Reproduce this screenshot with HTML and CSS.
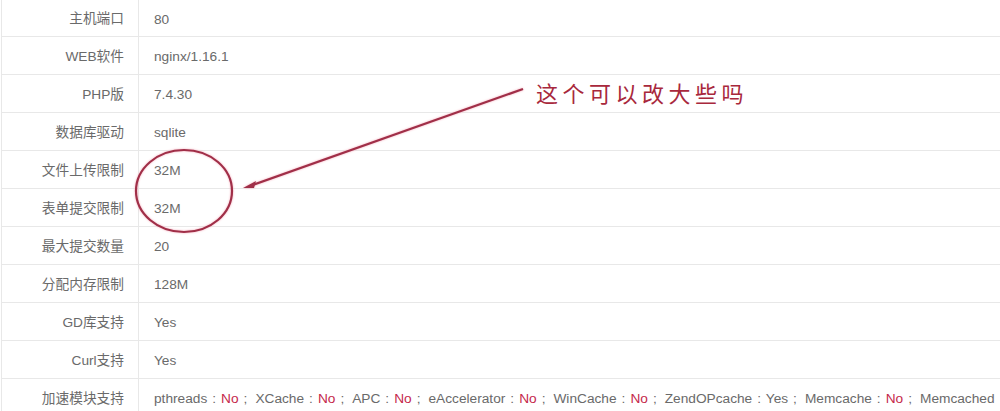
FILE: index.html
```html
<!DOCTYPE html>
<html lang="zh-CN">
<head>
<meta charset="utf-8">
<title>服务器信息</title>
<link rel="stylesheet" href="styles.css">
</head>
<body>
<div class="sheet">
  <div class="info">
    <div class="row first"><div class="key">主机端口</div><div class="val">80</div></div>
    <div class="row"><div class="key">WEB软件</div><div class="val">nginx/1.16.1</div></div>
    <div class="row"><div class="key">PHP版</div><div class="val">7.4.30</div></div>
    <div class="row"><div class="key">数据库驱动</div><div class="val">sqlite</div></div>
    <div class="row"><div class="key">文件上传限制</div><div class="val">32M</div></div>
    <div class="row"><div class="key">表单提交限制</div><div class="val">32M</div></div>
    <div class="row"><div class="key">最大提交数量</div><div class="val">20</div></div>
    <div class="row"><div class="key">分配内存限制</div><div class="val">128M</div></div>
    <div class="row"><div class="key">GD库支持</div><div class="val">Yes</div></div>
    <div class="row"><div class="key">Curl支持</div><div class="val">Yes</div></div>
    <div class="row"><div class="key">加速模块支持</div><div class="val mods">
      <span class="mod">pthreads : <b class="no">No</b> ;</span>
      <span class="mod">XCache : <b class="no">No</b> ;</span>
      <span class="mod">APC : <b class="no">No</b> ;</span>
      <span class="mod">eAccelerator : <b class="no">No</b> ;</span>
      <span class="mod">WinCache : <b class="no">No</b> ;</span>
      <span class="mod">ZendOPcache : Yes ;</span>
      <span class="mod">Memcache : <b class="no">No</b> ;</span>
      <span class="mod">Memcached</span>
    </div></div>
  </div>
  <svg class="marks" width="1000" height="411" viewBox="0 0 1000 411" aria-hidden="true">
    <ellipse class="ink" cx="184" cy="191" rx="48" ry="41"/>
    <path class="ink" d="M523 89 L250 186"/>
    <path class="tip" d="M243 188 L256 181 L254 188 Z"/>
  </svg>
  <div class="note">这个可以改大些吗</div>
</div>
</body>
</html>
```
FILE: styles.css
```css
html, body {
  margin: 0;
  padding: 0;
  background: #fff;
}
.sheet {
  position: relative;
  width: 1000px;
  height: 411px;
  overflow: hidden;
  font-family: "Liberation Sans", "Noto Sans CJK SC", sans-serif;
  font-size: 13.7px;
  color: #6a6a6a;
}
.info {
  margin-left: 1px;
  border-left: 1px solid #e8e8e8;
}
.row {
  display: grid;
  grid-template-columns: 137px 1fr;
  height: 38px;
  box-sizing: border-box;
  border-bottom: 1px solid #e8e8e8;
  align-items: center;
}
.row.first {
  height: 37px;
}
.key {
  height: 100%;
  box-sizing: border-box;
  display: flex;
  align-items: center;
  justify-content: flex-end;
  padding-right: 14px;
  padding-bottom: 2px;
  border-right: 1px solid #e8e8e8;
}
.val {
  padding-left: 15px;
  padding-top: 2px;
  white-space: nowrap;
}
.mods {
  display: flex;
  gap: 8px;
  word-spacing: 1.2px;
}
.no {
  font-weight: normal;
  color: #c5284a;
}
.marks {
  position: absolute;
  left: 0;
  top: 0;
  filter: drop-shadow(0 0 1px #f7b0bf);
}
.ink {
  fill: none;
  stroke: #a02f48;
  stroke-width: 2.2;
}
.tip {
  fill: #a02f48;
}
.note {
  position: absolute;
  left: 536px;
  top: 80px;
  font-size: 22px;
  line-height: 30px;
  letter-spacing: 4.5px;
  color: #a8283c;
  white-space: nowrap;
}
```
